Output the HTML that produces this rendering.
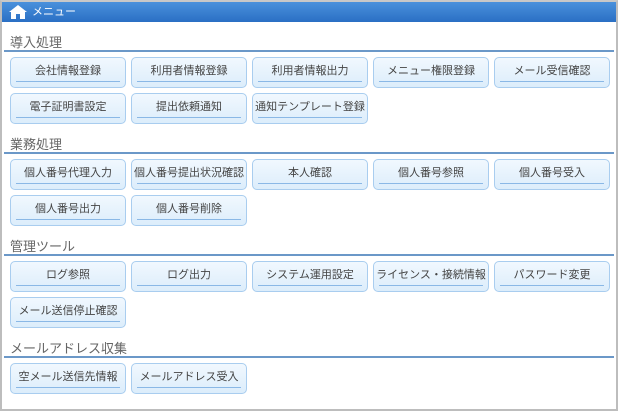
<!DOCTYPE html>
<html><head><meta charset="utf-8"><style>
*{margin:0;padding:0;box-sizing:border-box}
body{width:618px;height:411px;background:#fff;font-family:"Liberation Sans","Noto Sans CJK JP",sans-serif;position:relative;overflow:hidden}
.frame{position:absolute;left:0;top:0;width:618px;height:411px;border:2px solid #bdbdbd;border-top:2px solid #c8c8c8}
.hdr{position:absolute;left:2px;top:2px;width:614px;height:20px;background:linear-gradient(#4a91dc,#2a6fc4);color:#fff;font-size:11px;line-height:20px;padding-left:30px}
.hdr svg{position:absolute;left:7px;top:3px}
.sec{position:absolute;left:10px;font-size:13px;color:#666}
.line{position:absolute;left:4px;width:610px;height:2px;background:#6b98c8}
.b{position:absolute;width:116px;height:31px;border:1px solid #a9cdef;border-radius:5px;background:linear-gradient(#f1f8fe,#dcedfb);font-size:11px;color:#444;text-align:center;line-height:26px}
.b:after{content:"";position:absolute;left:5px;right:5px;bottom:5px;height:1px;background:#8ab8e6}
</style></head><body>
<div class="frame"></div>
<div class="hdr"><svg width="18" height="14" viewBox="0 0 18 14"><path d="M9 0 L18 7 L16 7 L16 14 L11 14 L11 9 L7 9 L7 14 L2 14 L2 7 L0 7 Z" fill="#fff"/></svg>メニュー</div>

<div class="sec" style="top:32px">導入処理</div><div class="line" style="top:50px"></div>
<div class="b" style="left:10px;top:57px">会社情報登録</div>
<div class="b" style="left:131px;top:57px">利用者情報登録</div>
<div class="b" style="left:252px;top:57px">利用者情報出力</div>
<div class="b" style="left:373px;top:57px">メニュー権限登録</div>
<div class="b" style="left:494px;top:57px">メール受信確認</div>
<div class="b" style="left:10px;top:93px">電子証明書設定</div>
<div class="b" style="left:131px;top:93px">提出依頼通知</div>
<div class="b" style="left:252px;top:93px">通知テンプレート登録</div>

<div class="sec" style="top:134px">業務処理</div><div class="line" style="top:152px"></div>
<div class="b" style="left:10px;top:159px">個人番号代理入力</div>
<div class="b" style="left:131px;top:159px">個人番号提出状況確認</div>
<div class="b" style="left:252px;top:159px">本人確認</div>
<div class="b" style="left:373px;top:159px">個人番号参照</div>
<div class="b" style="left:494px;top:159px">個人番号受入</div>
<div class="b" style="left:10px;top:195px">個人番号出力</div>
<div class="b" style="left:131px;top:195px">個人番号削除</div>

<div class="sec" style="top:236px">管理ツール</div><div class="line" style="top:254px"></div>
<div class="b" style="left:10px;top:261px">ログ参照</div>
<div class="b" style="left:131px;top:261px">ログ出力</div>
<div class="b" style="left:252px;top:261px">システム運用設定</div>
<div class="b" style="left:373px;top:261px">ライセンス・接続情報</div>
<div class="b" style="left:494px;top:261px">パスワード変更</div>
<div class="b" style="left:10px;top:297px">メール送信停止確認</div>

<div class="sec" style="top:338px">メールアドレス収集</div><div class="line" style="top:356px"></div>
<div class="b" style="left:10px;top:363px">空メール送信先情報</div>
<div class="b" style="left:131px;top:363px">メールアドレス受入</div>
</body></html>
